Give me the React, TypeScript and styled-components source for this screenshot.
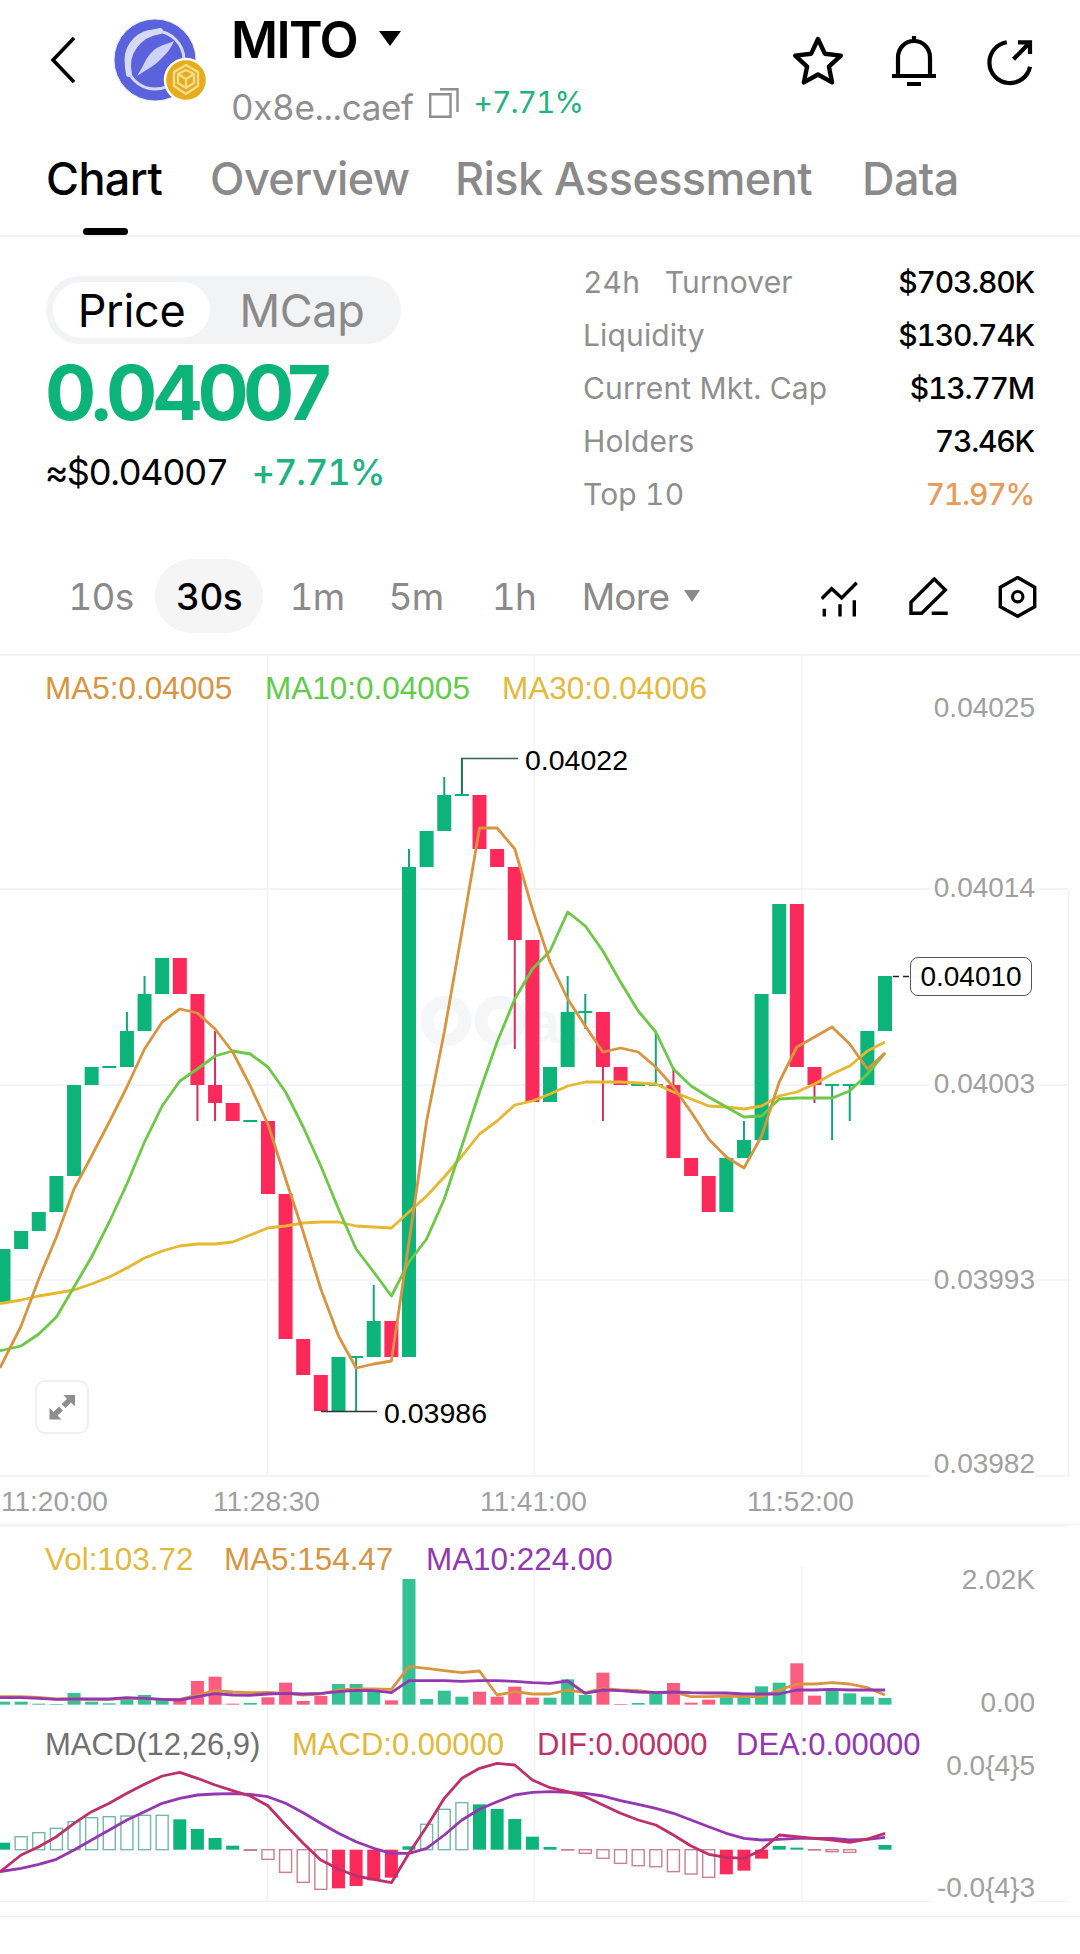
import React from "react";
import styled, { createGlobalStyle } from "styled-components";

const GREEN = "#0cb47a";
const RED = "#fb2a5a";
const MA_ORANGE = "#d9943f";
const MA_GREEN = "#6cc945";
const MA_YELLOW = "#e6b72f";
const PURPLE = "#9437b0";
const CRIMSON = "#c02f6c";
const GRID = "#f1f2f3";

const GlobalStyle = createGlobalStyle`
  html, body {
    margin: 0;
    padding: 0;
    background: #fff;
  }
  * {
    box-sizing: border-box;
  }
`;

const Page = styled.div`
  width: 1080px;
  height: 1954px;
  overflow: hidden;
  background: #fff;
  color: #000;
  font-family: Inter, "Liberation Sans", sans-serif;
  font-variant-numeric: tabular-nums;
`;

const Header = styled.header`
  display: flex;
  align-items: flex-start;
  height: 125px;
  padding-left: 50px;
`;

const BackButton = styled.svg`
  width: 26px;
  height: 48px;
  margin-top: 36px;
  flex: none;
`;

const CoinLogo = styled.svg`
  width: 96px;
  height: 90px;
  margin: 16px 0 0 36px;
  flex: none;
`;

const TitleColumn = styled.div`
  display: flex;
  flex-direction: column;
  margin-left: 23px;
  width: 390px;
  flex: none;
`;

const TitleRow = styled.div`
  display: flex;
  align-items: center;
  height: 80px;
`;

const CoinName = styled.span`
  font-size: 51px;
  font-weight: 600;
  letter-spacing: -1.6px;
  line-height: 80px;
`;

const TitleCaret = styled.span`
  width: 0;
  height: 0;
  margin: -3px 0 0 22px;
  border-left: 11.5px solid transparent;
  border-right: 11.5px solid transparent;
  border-top: 15px solid #000;
`;

const AddressRow = styled.div`
  display: flex;
  align-items: flex-start;
  height: 44px;
`;

const Address = styled.span`
  margin-top: 5px;
  font-size: 35px;
  line-height: 44px;
  color: #8f8f8f;
  letter-spacing: -0.35px;
`;

const CopyIcon = styled.svg`
  width: 30px;
  height: 30px;
  margin: 8px 0 0 15px;
  flex: none;
`;

const AddressChange = styled.span`
  margin: 4px 0 0 15px;
  font-size: 30px;
  line-height: 36px;
  letter-spacing: -1px;
  color: #1fb283;
`;

const HeaderActions = styled.div`
  display: flex;
  align-items: flex-start;
  margin-left: 171px;
`;

const ActionIcon = styled.svg<{ $gap: number; $top: number }>`
  margin-left: ${(p) => p.$gap}px;
  margin-top: ${(p) => p.$top}px;
  flex: none;
`;

const Tabs = styled.nav`
  display: flex;
  height: 112px;
  padding-left: 46px;
  border-bottom: 2px solid #f3f3f3;
`;

const Tab = styled.div<{ $active?: boolean; $width: number }>`
  position: relative;
  width: ${(p) => p.$width}px;
  flex: none;
  font-size: 45px;
  font-weight: 500;
  line-height: 52px;
  padding-top: 28px;
  letter-spacing: -0.6px;
  white-space: nowrap;
  color: ${(p) => (p.$active ? "#000" : "#8a8a8a")};
`;

const TabMarker = styled.span`
  position: absolute;
  left: 37px;
  bottom: 0;
  width: 45px;
  height: 7px;
  border-radius: 4px;
  background: #000;
`;

const Summary = styled.section`
  display: flex;
  justify-content: space-between;
  height: 319px;
  padding: 0 46px;
`;

const PriceColumn = styled.div`
  display: flex;
  flex-direction: column;
  align-items: flex-start;
`;

const PriceToggle = styled.div`
  display: flex;
  align-items: center;
  width: 355px;
  height: 68px;
  margin-top: 39px;
  padding: 0 7px;
  border-radius: 34px;
  background: #f2f3f5;
`;

const ToggleOption = styled.div<{ $active?: boolean }>`
  display: flex;
  align-items: center;
  justify-content: center;
  width: ${(p) => (p.$active ? 158 : 185)}px;
  height: 56px;
  border-radius: 28px;
  font-size: 45px;
  letter-spacing: -0.3px;
  background: ${(p) => (p.$active ? "#fff" : "transparent")};
  color: ${(p) => (p.$active ? "#000" : "#8a8a8a")};
`;

const BigPrice = styled.div`
  margin: 6px 0 0 -1px;
  font-size: 76px;
  font-weight: 700;
  line-height: 84px;
  letter-spacing: -5.6px;
  font-variant-numeric: normal;
  color: ${GREEN};
`;

const SubPriceRow = styled.div`
  display: flex;
  margin: 15px 0 0 -1px;
  font-size: 36px;
  line-height: 46px;
`;

const SubPrice = styled.span`
  letter-spacing: -1.5px;
`;

const SubChange = styled.span`
  margin-left: 24px;
  font-weight: 500;
  letter-spacing: -1px;
  color: #1fb283;
`;

const StatsColumn = styled.div`
  display: flex;
  flex-direction: column;
  width: 451px;
  padding-top: 19px;
`;

const StatRow = styled.div`
  display: flex;
  justify-content: space-between;
  height: 53px;
  font-size: 30px;
  line-height: 53px;
`;

const StatLabel = styled.span`
  color: #8f8f8f;
  letter-spacing: 0.15px;
  white-space: pre;
`;

const StatValue = styled.span<{ $tone?: string }>`
  font-weight: 500;
  letter-spacing: -1.2px;
  color: ${(p) => p.$tone ?? "#000"};
`;

const IntervalBar = styled.div`
  display: flex;
  align-items: flex-start;
  height: 98px;
  padding-left: 30px;
`;

const IntervalPill = styled.div<{ $active?: boolean; $width: number; $gap: number }>`
  display: flex;
  align-items: center;
  justify-content: center;
  flex: none;
  width: ${(p) => p.$width}px;
  height: 74px;
  margin: 3px 0 0 ${(p) => p.$gap}px;
  border-radius: 37px;
  font-size: 37px;
  letter-spacing: -0.7px;
  font-weight: ${(p) => (p.$active ? 500 : 400)};
  background: ${(p) => (p.$active ? "#f5f5f5" : "transparent")};
  color: ${(p) => (p.$active ? "#000" : "#8a8a8a")};
`;

const MoreCaret = styled.span`
  width: 0;
  height: 0;
  margin-left: 15px;
  border-left: 8.5px solid transparent;
  border-right: 8.5px solid transparent;
  border-top: 12px solid #8a8a8a;
`;

const ToolIcon = styled.svg<{ $gap: number; $top: number }>`
  flex: none;
  margin: ${(p) => p.$top}px 0 0 ${(p) => p.$gap}px;
`;

const ChartPane = styled.div<{ $height: number }>`
  position: relative;
  height: ${(p) => p.$height}px;
  font-family: "Liberation Sans", Arial, sans-serif;
`;

const ChartCanvas = styled.svg`
  display: block;
  width: 1080px;
  height: 100%;
`;

const Legend = styled.div<{ $top: number; $size: number }>`
  position: absolute;
  left: 0;
  top: ${(p) => p.$top}px;
  display: flex;
  font-size: ${(p) => p.$size}px;
  line-height: 36px;
  white-space: nowrap;
`;

const LegendItem = styled.span<{ $tone: string; $left: number }>`
  position: absolute;
  left: ${(p) => p.$left}px;
  top: 0;
  color: ${(p) => p.$tone};
`;

const AxisLabel = styled.span<{ $top: number }>`
  position: absolute;
  right: 45px;
  top: ${(p) => p.$top}px;
  padding-left: 5px;
  font-size: 28px;
  line-height: 32px;
  color: #a0a0a0;
  background: #fff;
`;

const ExtremeLabel = styled.span<{ $left: number; $top: number }>`
  position: absolute;
  left: ${(p) => p.$left}px;
  top: ${(p) => p.$top}px;
  font-size: 28.5px;
  line-height: 32px;
  color: #000;
`;

const LastPriceTag = styled.div`
  position: absolute;
  left: 910px;
  top: 303px;
  display: flex;
  align-items: center;
  justify-content: center;
  width: 122px;
  height: 39px;
  border: 1.5px solid #555;
  border-radius: 8px;
  font-size: 28px;
  background: #fff;
`;

const ExpandButton = styled.button`
  position: absolute;
  left: 35px;
  top: 726px;
  display: flex;
  align-items: center;
  justify-content: center;
  width: 54px;
  height: 54px;
  padding: 0;
  border: 2px solid #f0f0f0;
  border-radius: 10px;
  background: #fff;
`;

const TimeAxis = styled.div`
  position: relative;
  height: 48px;
  border-bottom: 1.5px solid #f3f3f3;
  font-family: "Liberation Sans", Arial, sans-serif;
`;

const TimeLabel = styled.span<{ $left: number }>`
  position: absolute;
  left: ${(p) => p.$left}px;
  top: 9px;
  font-size: 28px;
  line-height: 32px;
  color: #a0a0a0;
`;

const FooterRule = styled.div`
  height: 1px;
  margin-top: 14px;
  background: #f0f0f0;
`;

// colour, body top, body bottom, wick top, wick bottom (page pixels)
type Candle = ["g" | "r", number, number, number?, number?];

const candles: Candle[] = [
  ["g", 1250, 1303],
  ["g", 1232, 1250],
  ["g", 1213, 1232],
  ["g", 1177, 1213],
  ["g", 1086, 1177],
  ["g", 1068, 1086],
  ["g", 1067, 1069],
  ["g", 1032, 1068, 1013],
  ["g", 995, 1032, 977],
  ["g", 959, 995],
  ["r", 959, 995],
  ["r", 995, 1086, undefined, 1122],
  ["r", 1086, 1104, 1032, 1122],
  ["r", 1104, 1122],
  ["g", 1121, 1123],
  ["r", 1122, 1195],
  ["r", 1195, 1340],
  ["r", 1340, 1376],
  ["r", 1376, 1412],
  ["g", 1358, 1412],
  ["g", 1357, 1359, undefined, 1412],
  ["g", 1322, 1358, 1286],
  ["r", 1322, 1358],
  ["g", 868, 1358, 850],
  ["g", 832, 868],
  ["g", 796, 832, 778],
  ["g", 795, 797, 759],
  ["r", 796, 850],
  ["r", 850, 868],
  ["r", 868, 941, undefined, 1050],
  ["r", 941, 1103],
  ["g", 1068, 1103],
  ["g", 1013, 1068, 977],
  ["g", 1012, 1014, 995, 1030],
  ["r", 1013, 1068, undefined, 1122],
  ["r", 1068, 1086],
  ["g", 1085, 1087],
  ["g", 1085, 1087, 1032],
  ["r", 1086, 1159, 1068],
  ["r", 1159, 1177],
  ["r", 1177, 1213],
  ["g", 1159, 1213],
  ["g", 1141, 1159, 1122],
  ["g", 995, 1141],
  ["g", 905, 995],
  ["r", 905, 1068],
  ["r", 1068, 1086, undefined, 1104],
  ["g", 1085, 1087, undefined, 1141],
  ["g", 1085, 1087, undefined, 1122],
  ["g", 1032, 1086],
  ["g", 977, 1032],
];

const ma5 = [
  1362, 1327, 1280, 1238, 1190, 1157, 1123, 1088, 1050, 1023, 1010, 1014, 1030, 1053, 1087, 1125, 1180,
  1233, 1290, 1337, 1369, 1365, 1362, 1243, 1122, 1033, 933, 829, 829, 850, 910, 963, 1000, 1027, 1053,
  1049, 1053, 1068, 1088, 1113, 1140, 1158, 1169, 1137, 1083, 1048, 1038, 1028, 1045, 1070, 1054,
];
const ma10 = [
  1351, 1347, 1335, 1318, 1288, 1258, 1223, 1185, 1143, 1107, 1082, 1070, 1057, 1052, 1055, 1068, 1093,
  1128, 1167, 1210, 1250, 1273, 1297, 1263, 1240, 1200, 1147, 1093, 1043, 1000, 970, 952, 913, 927, 952,
  983, 1012, 1033, 1070, 1087, 1098, 1108, 1118, 1117, 1100, 1099, 1099, 1099, 1092, 1075, 1054,
];
const ma30 = [
  1304, 1301, 1297, 1294, 1291, 1285, 1278, 1269, 1259, 1252, 1247, 1245, 1245, 1243, 1236, 1229, 1227,
  1224, 1223, 1223, 1227, 1228, 1229, 1213, 1197, 1178, 1157, 1135, 1122, 1106, 1102, 1095, 1087, 1083,
  1083, 1083, 1084, 1085, 1093, 1100, 1107, 1108, 1110, 1107, 1097, 1093, 1085, 1075, 1067, 1052, 1043,
];

const volumes: ["g" | "r", number][] = [
  ["g", 545], ["g", 545], ["g", 551], ["g", 552], ["g", 519], ["g", 545], ["g", 550], ["g", 531], ["g", 525],
  ["g", 540], ["r", 540], ["r", 483], ["r", 470], ["r", 551], ["g", 549], ["r", 532], ["r", 488], ["r", 543],
  ["r", 528], ["g", 492], ["g", 492], ["g", 512], ["r", 541], ["g", 177], ["g", 537], ["g", 512], ["g", 530],
  ["r", 515], ["r", 530], ["r", 500], ["r", 533], ["g", 533], ["g", 478], ["g", 525], ["r", 458], ["r", 552],
  ["g", 549], ["g", 522], ["r", 489], ["r", 548], ["r", 539], ["g", 532], ["g", 529], ["g", 499], ["g", 488],
  ["r", 430], ["r", 527], ["g", 510], ["g", 520], ["g", 530], ["g", 534],
];
const volMa5 = [
  530, 530, 532, 537, 537, 538, 538, 535, 535, 538, 538, 525, 512, 516, 518, 517, 520, 525, 522, 510, 507,
  507, 508, 440, 445, 452, 458, 453, 525, 515, 522, 522, 510, 518, 506, 510, 512, 518, 516, 530, 530, 528,
  530, 530, 510, 492, 492, 488, 492, 503, 525,
];
const volMa10 = [
  533, 533, 535, 538, 537, 537, 537, 533, 535, 538, 540, 530, 521, 525, 526, 522, 520, 522, 520, 515, 511,
  512, 518, 482, 482, 482, 484, 482, 482, 484, 488, 490, 483, 520, 510, 512, 516, 518, 516, 518, 519, 519,
  522, 522, 522, 510, 510, 508, 510, 510, 510,
];

// filled flag, end of bar measured in crop rows (baseline 989)
const macdBars: [boolean, number][] = [
  [true, 968], [false, 950], [false, 938], [false, 925], [false, 905], [false, 893], [false, 890], [false, 888],
  [false, 886], [false, 886], [true, 898], [true, 927], [true, 954], [true, 977], [false, 991], [false, 1018],
  [false, 1057], [false, 1087], [false, 1108], [true, 1105], [true, 1098], [true, 1081], [true, 1073], [true, 979],
  [false, 913], [false, 868], [false, 848], [true, 853], [true, 867], [true, 897], [true, 950], [true, 981],
  [false, 990], [false, 1000], [false, 1015], [false, 1030], [false, 1037], [false, 1040], [false, 1055],
  [false, 1062], [false, 1072], [true, 1063], [true, 1052], [true, 1016], [true, 978], [true, 983], [false, 990],
  [false, 995], [false, 997], [false, 989], [true, 975],
];
const dif = [
  1047, 1005, 980, 950, 910, 875, 850, 820, 793, 768, 757, 775, 795, 812, 828, 857, 915, 970, 1020, 1047, 1068,
  1078, 1088, 1000, 920, 835, 775, 745, 730, 735, 780, 803, 815, 830, 855, 880, 900, 915, 945, 978, 1003, 1012,
  1015, 990, 945, 950, 955, 960, 967, 957, 940,
];
const dea = [
  1053, 1045, 1033, 1018, 990, 960, 930, 900, 875, 850, 835, 825, 822, 821, 823, 830, 850, 878, 910, 940, 965,
  985, 1000, 1000, 985, 945, 900, 868, 845, 825, 817, 815, 817, 820, 828, 842, 853, 865, 880, 900, 920, 940, 955,
  960, 958, 955, 955, 955, 960, 958, 952,
];

const centerX = (i: number) => 3.5 + 17.63 * i;
const rowToY = (z: number) => 1520 + z / 3;

// every line runs off the left edge, so it gets one extrapolated point at x = 0
const toPoints = (ys: number[], mapY: (v: number) => number = (v) => v) => {
  const mapped = ys.map(mapY);
  const edge = mapped[0] + ((mapped[0] - mapped[1]) * 3.5) / 17.63;
  const line = mapped.map((y, i) => `${centerX(i).toFixed(1)},${y.toFixed(1)}`);
  return [`0,${edge.toFixed(1)}`, ...line].join(" ");
};

const MaLine = styled.polyline.attrs({ fill: "none" })`
  stroke-width: 2.8;
  stroke-linejoin: round;
`;

const GridLines = ({ top, bottom }: { top: number; bottom: number }) => (
  <g stroke={GRID} strokeWidth="1.5">
    {[267.5, 534.5, 801.5].map((x) => (
      <line key={x} x1={x} x2={x} y1={top} y2={bottom} />
    ))}
  </g>
);

const PriceChart = () => (
  <ChartCanvas viewBox="0 655 1080 823">
    <GridLines top={655} bottom={1477} />
    <g stroke={GRID} strokeWidth="1.5">
      <line x1="0" x2="1080" y1="656" y2="656" />
      <line x1="0" x2="1068.5" y1="890" y2="890" />
      <line x1="0" x2="1068.5" y1="1086" y2="1086" />
      <line x1="0" x2="1068.5" y1="1281" y2="1281" />
      <line x1="0" x2="1068.5" y1="1477" y2="1477" />
      <line x1="1068.5" x2="1068.5" y1="890" y2="1477" />
    </g>
    <g fill="#f5f6f7">
      <circle cx="446" cy="1022" r="19" fill="none" stroke="#f5f6f7" strokeWidth="13" />
      <circle cx="500" cy="1022" r="19" fill="none" stroke="#f5f6f7" strokeWidth="13" />
      <text x="528" y="1043" fontFamily="Liberation Sans, sans-serif" fontWeight="700" fontSize="58">
        ate
      </text>
    </g>
    {candles.map(([tone, top, bottom, high, low], i) => {
      const x = centerX(i);
      const fill = tone === "g" ? GREEN : RED;
      const wick = tone === "g" ? "#14a57c" : "#d3305f";
      return (
        <g key={i}>
          {high !== undefined && <rect x={x - 1} y={high} width="2" height={top - high} fill={wick} />}
          {low !== undefined && <rect x={x - 1} y={bottom} width="2" height={low - bottom} fill={wick} />}
          <rect x={x - 7} y={top} width="14" height={bottom - top} fill={fill} />
        </g>
      );
    })}
    <MaLine points={toPoints(ma30)} stroke={MA_YELLOW} />
    <MaLine points={toPoints(ma10)} stroke={MA_GREEN} />
    <MaLine points={toPoints(ma5)} stroke={MA_ORANGE} />
    <path d="M462 795V759.5H518" fill="none" stroke="#3c5f55" strokeWidth="1.5" />
    <path d="M321 1412.5H377" fill="none" stroke="#333" strokeWidth="1.5" />
    <path d="M893 977.5H909" fill="none" stroke="#222" strokeWidth="1.5" strokeDasharray="6 4" />
  </ChartCanvas>
);

const VolumeChart = () => (
  <ChartCanvas viewBox="0 1525 1080 190">
    <GridLines top={1567} bottom={1715} />
    <line x1="0" x2="1068" y1="1526" y2="1526" stroke={GRID} strokeWidth="1.5" />
    {volumes.map(([tone, z], i) => (
      <rect
        key={i}
        x={centerX(i) - 6.5}
        y={rowToY(z)}
        width="13"
        height={rowToY(554) - rowToY(z)}
        fill={tone === "g" ? "#34c295" : "#fb5c7f"}
      />
    ))}
    <MaLine points={toPoints(volMa5, rowToY)} stroke={MA_ORANGE} />
    <MaLine points={toPoints(volMa10, rowToY)} stroke={PURPLE} />
  </ChartCanvas>
);

const MacdChart = () => (
  <ChartCanvas viewBox="0 1715 1080 187">
    <GridLines top={1715} bottom={1901} />
    <line x1="0" x2="1068" y1="1901.5" y2="1901.5" stroke={GRID} strokeWidth="1.5" />
    {macdBars.map(([filled, z], i) => {
      const base = rowToY(989);
      const y = rowToY(z);
      const top = Math.min(base, y);
      const height = Math.abs(y - base);
      const up = z < 989;
      if (filled) {
        return <rect key={i} x={centerX(i) - 6.5} y={top} width="13" height={height} fill={up ? GREEN : RED} />;
      }
      return (
        <rect
          key={i}
          x={centerX(i) - 6}
          y={top}
          width="12"
          height={height}
          fill="none"
          stroke={up ? "#72b9a6" : "#c9808f"}
          strokeWidth="1.4"
        />
      );
    })}
    <MaLine points={toPoints(dea, rowToY)} stroke={PURPLE} />
    <MaLine points={toPoints(dif, rowToY)} stroke={CRIMSON} />
  </ChartCanvas>
);

const StarIcon = () => (
  <ActionIcon $gap={0} $top={36} width="52" height="50" viewBox="0 0 52 50">
    <polygon
      points="26,3 32.8,17.7 48.8,19.6 36.9,30.6 40.1,46.4 26,38.5 11.9,46.4 15.1,30.6 3.2,19.6 19.2,17.7"
      fill="none"
      stroke="#000"
      strokeWidth="4.4"
      strokeLinejoin="round"
    />
  </ActionIcon>
);

const BellIcon = () => (
  <ActionIcon $gap={48} $top={36} width="44" height="50" viewBox="0 0 44 50">
    <path
      d="M22 0V5M6 40V21.5C6 12 13 5 22 5S38 12 38 21.5V40M0 40H44M15 48H29"
      fill="none"
      stroke="#000"
      strokeWidth="4.2"
    />
  </ActionIcon>
);

const ShareIcon = () => (
  <ActionIcon $gap={50} $top={38} width="48" height="48" viewBox="0 0 48 48">
    <path
      d="M20.7 4.3A20.5 20.5 0 1 0 44 28.7M27.5 21.3L44 4.3M32 4.3H44V16"
      fill="none"
      stroke="#000"
      strokeWidth="4.2"
    />
  </ActionIcon>
);

const App = () => (
  <Page>
    <GlobalStyle />
    <Header>
      <BackButton viewBox="0 0 26 48">
        <path d="M24 2L3 24L24 46" fill="none" stroke="#000" strokeWidth="3.6" />
      </BackButton>
      <CoinLogo viewBox="0 0 96 90">
        <circle cx="43" cy="44" r="41" fill="#5b63dc" stroke="#e7e8fb" strokeWidth="1" />
        <circle cx="43" cy="44" r="29" fill="none" stroke="#d6daf7" strokeWidth="3" />
        <path d="M17 58C12 38 26 18 48 15" fill="none" stroke="#d6daf7" strokeWidth="6" strokeLinecap="round" />
        <path d="M25 60C32 50 33 42 42 34C48 29 56 28 62 25C58 34 54 38 48 44C42 50 34 54 25 60Z" fill="#cdd2f6" />
        <circle cx="74" cy="64" r="21" fill="#e5ac1c" stroke="#fff" strokeWidth="2.5" />
        <g fill="none" stroke="#f6dc8c" strokeWidth="2.4" strokeLinejoin="round">
          <path d="M74 49L86 56V70L74 78L62 70V56Z" />
          <path d="M66 58L74 54L82 58V67L74 72L66 67Z" />
          <path d="M66 58L74 63L82 58M74 63V72" />
        </g>
      </CoinLogo>
      <TitleColumn>
        <TitleRow>
          <CoinName>MITO</CoinName>
          <TitleCaret />
        </TitleRow>
        <AddressRow>
          <Address>0x8e...caef</Address>
          <CopyIcon viewBox="0 0 30 30">
            <path d="M1.2 6.2H21.5V28.8H1.2Z" fill="none" stroke="#8f8f8f" strokeWidth="2.4" />
            <path d="M11 1.2H28.5V24" fill="none" stroke="#8f8f8f" strokeWidth="2.4" />
          </CopyIcon>
          <AddressChange>+7.71%</AddressChange>
        </AddressRow>
      </TitleColumn>
      <HeaderActions>
        <StarIcon />
        <BellIcon />
        <ShareIcon />
      </HeaderActions>
    </Header>

    <Tabs>
      <Tab $active $width={164}>
        Chart
        <TabMarker />
      </Tab>
      <Tab $width={245}>Overview</Tab>
      <Tab $width={407}>Risk Assessment</Tab>
      <Tab $width={120}>Data</Tab>
    </Tabs>

    <Summary>
      <PriceColumn>
        <PriceToggle>
          <ToggleOption $active>Price</ToggleOption>
          <ToggleOption>MCap</ToggleOption>
        </PriceToggle>
        <BigPrice>0.04007</BigPrice>
        <SubPriceRow>
          <SubPrice>≈$0.04007</SubPrice>
          <SubChange>+7.71%</SubChange>
        </SubPriceRow>
      </PriceColumn>
      <StatsColumn>
        <StatRow>
          <StatLabel>24h   Turnover</StatLabel>
          <StatValue>$703.80K</StatValue>
        </StatRow>
        <StatRow>
          <StatLabel>Liquidity</StatLabel>
          <StatValue>$130.74K</StatValue>
        </StatRow>
        <StatRow>
          <StatLabel>Current Mkt. Cap</StatLabel>
          <StatValue>$13.77M</StatValue>
        </StatRow>
        <StatRow>
          <StatLabel>Holders</StatLabel>
          <StatValue>73.46K</StatValue>
        </StatRow>
        <StatRow>
          <StatLabel>Top 10</StatLabel>
          <StatValue $tone="#e89a5a">71.97%</StatValue>
        </StatRow>
      </StatsColumn>
    </Summary>

    <IntervalBar>
      <IntervalPill $width={90} $gap={26}>10s</IntervalPill>
      <IntervalPill $active $width={108} $gap={9}>30s</IntervalPill>
      <IntervalPill $width={72} $gap={18}>1m</IntervalPill>
      <IntervalPill $width={72} $gap={27}>5m</IntervalPill>
      <IntervalPill $width={60} $gap={32}>1h</IntervalPill>
      <IntervalPill $width={124} $gap={35}>
        More
        <MoreCaret />
      </IntervalPill>
      <ToolIcon $gap={118} $top={25} width="37" height="37" viewBox="0 0 37 37">
        <path d="M0.7 17.7L10.7 7.7L20.7 17L35.7 1.7M3.3 27.7V35.5M19 23.3V35.5M33.3 19.3V35.5" fill="none" stroke="#000" strokeWidth="3.4" />
      </ToolIcon>
      <ToolIcon $gap={51} $top={21} width="40" height="40" viewBox="0 0 40 40">
        <path d="M25.3 2L36.3 13L12.7 36.3H2V25.3ZM22.7 36.3H38.7" fill="none" stroke="#000" strokeWidth="3.4" />
      </ToolIcon>
      <ToolIcon $gap={49} $top={20} width="40" height="42" viewBox="0 0 40 42">
        <path d="M19.7 1.5L36.7 11.3V30.7L19.7 40.3L2.3 30.7V11.3Z" fill="none" stroke="#000" strokeWidth="3.4" />
        <circle cx="19.7" cy="20.7" r="5.2" fill="none" stroke="#000" strokeWidth="3.2" />
      </ToolIcon>
    </IntervalBar>

    <ChartPane $height={823}>
      <PriceChart />
      <Legend $top={16} $size={31.5}>
        <LegendItem $tone={MA_ORANGE} $left={45}>MA5:0.04005</LegendItem>
        <LegendItem $tone="#61cc4a" $left={265}>MA10:0.04005</LegendItem>
        <LegendItem $tone="#e3b93c" $left={502}>MA30:0.04006</LegendItem>
      </Legend>
      <AxisLabel $top={38}>0.04025</AxisLabel>
      <AxisLabel $top={218}>0.04014</AxisLabel>
      <AxisLabel $top={414}>0.04003</AxisLabel>
      <AxisLabel $top={610}>0.03993</AxisLabel>
      <AxisLabel $top={794}>0.03982</AxisLabel>
      <ExtremeLabel $left={525} $top={90}>0.04022</ExtremeLabel>
      <ExtremeLabel $left={384} $top={743}>0.03986</ExtremeLabel>
      <LastPriceTag>0.04010</LastPriceTag>
      <ExpandButton aria-label="Expand chart">
        <svg width="27" height="26" viewBox="0 0 27 26">
          <path
            d="M14.5 1H26V12.5L22 8.5L16.5 14L12.5 10L18 5ZM0.5 14L4.5 18L10 12.5L14 16.5L8.5 21.5L12.5 25.5H0.5Z"
            fill="#8e8e8e"
          />
        </svg>
      </ExpandButton>
    </ChartPane>

    <TimeAxis>
      <TimeLabel $left={1}>11:20:00</TimeLabel>
      <TimeLabel $left={213}>11:28:30</TimeLabel>
      <TimeLabel $left={480}>11:41:00</TimeLabel>
      <TimeLabel $left={747}>11:52:00</TimeLabel>
    </TimeAxis>

    <ChartPane $height={190}>
      <VolumeChart />
      <Legend $top={17} $size={31.4}>
        <LegendItem $tone="#e3b93c" $left={45}>Vol:103.72</LegendItem>
        <LegendItem $tone={MA_ORANGE} $left={224}>MA5:154.47</LegendItem>
        <LegendItem $tone={PURPLE} $left={426}>MA10:224.00</LegendItem>
      </Legend>
      <AxisLabel $top={39}>2.02K</AxisLabel>
      <AxisLabel $top={162}>0.00</AxisLabel>
    </ChartPane>

    <ChartPane $height={187}>
      <MacdChart />
      <Legend $top={12} $size={31}>
        <LegendItem $tone="#707070" $left={45}>MACD(12,26,9)</LegendItem>
        <LegendItem $tone="#e3b93c" $left={292}>MACD:0.00000</LegendItem>
        <LegendItem $tone={CRIMSON} $left={537}>DIF:0.00000</LegendItem>
        <LegendItem $tone={PURPLE} $left={736}>DEA:0.00000</LegendItem>
      </Legend>
      <AxisLabel $top={35}>0.0{"{4}"}5</AxisLabel>
      <AxisLabel $top={157}>-0.0{"{4}"}3</AxisLabel>
    </ChartPane>

    <FooterRule />
  </Page>
);

export default App;
